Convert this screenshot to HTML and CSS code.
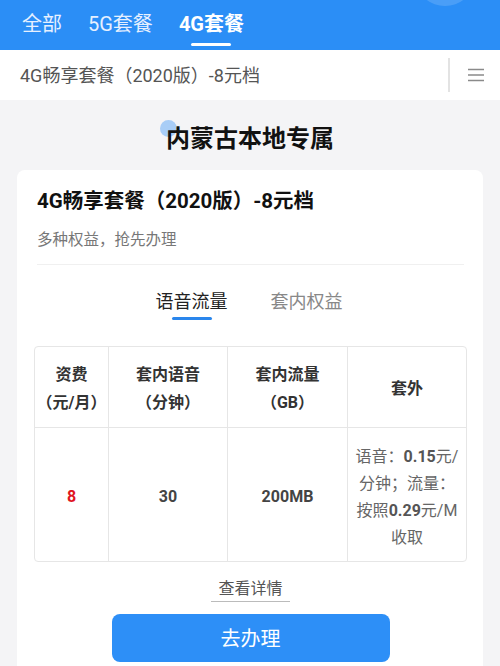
FILE: index.html
```html
<!DOCTYPE html>
<html lang="zh">
<head>
<meta charset="utf-8">
<link rel="stylesheet" href="styles.css">
</head>
<body>
<div class="topbar">
  <div class="ttab">全部</div>
  <div class="ttab">5G套餐</div>
  <div class="ttab active">4G套餐</div>
  <div class="halo"></div>
</div>
<div class="subbar">
  <div class="subtitle">4G畅享套餐（2020版）-8元档</div>
  <div class="sep"></div>
  <div class="menu">
    <svg width="18" height="16" viewBox="0 0 18 16"><path d="M1 2.5H17M1 8H17M1 13.5H17" stroke="#8a8a8a" stroke-width="1.5" fill="none"/></svg>
  </div>
</div>
<div class="main">
  <div class="region"><span class="dot"></span><span class="rtext">内蒙古本地专属</span></div>
  <div class="card">
    <div class="ctitle">4G畅享套餐（2020版）-8元档</div>
    <div class="cdesc">多种权益，抢先办理</div>
    <div class="divider"></div>
    <div class="tabs">
      <div class="tab on">语音流量</div>
      <div class="tab">套内权益</div>
    </div>
    <div class="tablewrap">
      <div class="grid">
        <div class="cell head"><div>资费<br>（元/月）</div></div>
        <div class="cell head"><div>套内语音<br>（分钟）</div></div>
        <div class="cell head"><div>套内流量<br>（GB）</div></div>
        <div class="cell head last"><div>套外</div></div>
        <div class="cell body red"><div>8</div></div>
        <div class="cell body num"><div>30</div></div>
        <div class="cell body num"><div>200MB</div></div>
        <div class="cell body extra last"><div>语音：<b>0.15</b>元/<br>分钟；流量：<br>按照<b>0.29</b>元/M<br>收取</div></div>
      </div>
    </div>
    <div class="more"><span>查看详情</span></div>
    <div class="btn">去办理</div>
  </div>
</div>
</body>
</html>
```
FILE: styles.css
```css
* { box-sizing: border-box; }
html, body { margin: 0; padding: 0; }
body {
  width: 500px;
  height: 666px;
  overflow: hidden;
  background: #f4f4f6;
  font-family: Roboto, "Noto Sans CJK SC", "Noto Sans", sans-serif;
  color: #222;
}
.topbar {
  position: relative;
  height: 50px;
  background: #2b8ef6;
  display: flex;
  align-items: flex-start;
  padding-left: 22px;
  gap: 26px;
  overflow: hidden;
}
.ttab {
  position: relative;
  color: #e6f0ff;
  font-size: 20px;
  line-height: 24px;
  padding-top: 12px;
  height: 50px;
}
.ttab.active { color: #fff; font-weight: bold; }
.ttab.active::after {
  content: "";
  position: absolute;
  left: 50%;
  margin-left: -20px;
  top: 43px;
  width: 40px;
  height: 3px;
  border-radius: 2px;
  background: #fff;
}
.halo {
  position: absolute;
  right: 28px;
  top: -40px;
  width: 54px;
  height: 46px;
  border-radius: 50%;
  background: rgba(255,255,255,0.15);
}
.subbar {
  height: 50px;
  background: #fff;
  display: flex;
  align-items: center;
  padding-left: 20px;
}
.subtitle {
  flex: 1;
  font-size: 18px;
  color: #555;
  line-height: 24px;
  padding-top: 2px;
}
.sep {
  width: 2px;
  height: 34px;
  background: #e3e3e3;
}
.menu {
  width: 50px;
  display: flex;
  justify-content: center;
  padding-left: 2px;
}
.menu svg { display: block; }
.main { padding: 0 17px; }
.region {
  position: relative;
  text-align: center;
  font-size: 24px;
  font-weight: bold;
  color: #111;
  line-height: 32px;
  padding-top: 23px;
  height: 70px;
}
.rtext { position: relative; }
.dot {
  position: absolute;
  left: 143px;
  top: 20px;
  width: 17px;
  height: 17px;
  border-radius: 50%;
  background: #a8cdf6;
}
.card {
  background: #fff;
  border-radius: 8px;
  padding: 17px 16px 0 17px;
  height: 520px;
}
.ctitle {
  font-size: 20.5px;
  font-weight: bold;
  color: #111;
  line-height: 28px;
  padding-left: 3px;
}
.cdesc {
  font-size: 15.5px;
  color: #777;
  line-height: 22px;
  margin-top: 14px;
  padding-left: 3px;
}
.divider {
  height: 1px;
  background: #f0f0f0;
  margin: 13px 3px 0 3px;
}
.tabs {
  display: flex;
  justify-content: center;
  gap: 43px;
  margin-top: 21px;
  padding-right: 3px;
}
.tab {
  position: relative;
  font-size: 18px;
  line-height: 26px;
  color: #888;
  height: 34px;
  padding-top: 3px;
}
.tab.on { color: #222; }
.tab.on::after {
  content: "";
  position: absolute;
  left: 50%;
  margin-left: -20px;
  bottom: 0;
  width: 40px;
  height: 3px;
  border-radius: 2px;
  background: #2a86ec;
}
.tablewrap {
  margin-top: 26px;
  border: 1px solid #e6e6e6;
  border-radius: 4px;
  overflow: hidden;
}
.grid {
  display: grid;
  grid-template-columns: 74px 119px 120px 1fr;
  grid-template-rows: 81px 133px;
}
.cell {
  display: flex;
  align-items: center;
  justify-content: center;
  text-align: center;
  border-right: 1px solid #e6e6e6;
  font-size: 16px;
  line-height: 28px;
  min-width: 0;
  padding-top: 4px;
}
.cell.last { border-right: none; }
.cell.head {
  font-weight: bold;
  color: #333;
  border-bottom: 1px solid #e6e6e6;
}
.cell.body { font-weight: bold; color: #444; padding-top: 5px; }
.cell.red { color: #e0141e; }
.cell.extra {
  font-weight: normal;
  color: #666;
  line-height: 27px;
  white-space: nowrap;
}
.cell.extra b { font-weight: bold; color: #555; }
.more {
  text-align: center;
  margin-top: 16px;
  font-size: 16px;
  color: #555;
  line-height: 22px;
}
.more span {
  display: inline-block;
  padding: 0 7px 1px 7px;
  border-bottom: 1px solid #bbb;
}
.btn {
  margin: 12px auto 0;
  width: 278px;
  height: 48px;
  border-radius: 8px;
  background: #2d8ff7;
  color: #fff;
  font-size: 20px;
  line-height: 50px;
  text-align: center;
}
```
